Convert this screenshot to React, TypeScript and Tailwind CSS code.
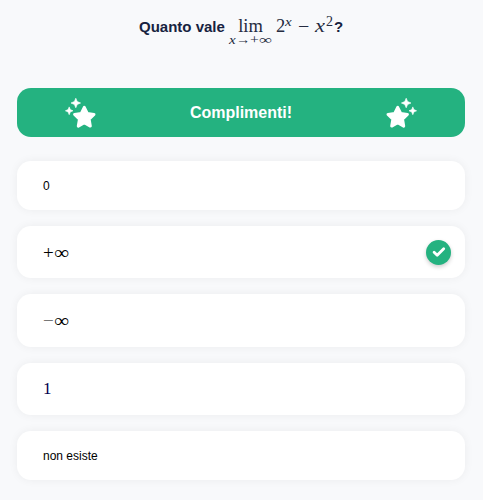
import type { ReactNode } from 'react';

function Stars({ flip = false }: { flip?: boolean }) {
  return (
    <svg viewBox="0 0 32 32" className={`mt-[3px] h-8 w-8 ${flip ? '-scale-x-100' : ''}`} fill="#fff" stroke="#fff" strokeLinejoin="round" aria-hidden="true">
      <path strokeWidth="3" d="M19.3 9.3l3 6.2 6.7.9-4.9 4.7 1.2 7-6-3.3-6 3.3 1.2-7-4.9-4.7 6.7-.9z" />
      <path strokeWidth=".6" d="M10.8.2l1.4 3.3 3.4 1.5-3.4 1.5-1.4 3.3-1.4-3.3L6 5l3.4-1.5zM4.2 8.9l1.1 2.7L8 12.8l-2.7 1.1-1.1 2.8-1.1-2.8-2.7-1.1 2.7-1.2z" />
    </svg>
  );
}

function Answer({ children, tall = false, correct = false }: { children: ReactNode; tall?: boolean; correct?: boolean }) {
  return (
    <div className={`flex w-full items-center justify-between rounded-[14px] bg-white pr-[14px] pl-[26px] text-[12px] text-black shadow-[0_0_10px_rgba(0,0,0,0.055)] ${tall ? 'h-[52.4px]' : 'h-[49px]'}`}>
      <div className="flex items-center">{children}</div>
      {correct && (
        <span className="flex h-[25px] w-[25px] items-center justify-center rounded-full bg-[#24b280] shadow-[0_2px_4px_rgba(0,0,0,0.2)]">
          <svg width="14" height="12" viewBox="0 0 14 12" fill="none" stroke="#fff" strokeWidth="2.8" strokeLinecap="round" strokeLinejoin="round" aria-hidden="true">
            <path d="M2.1 6.2l3.1 3L11.7 2.8" />
          </svg>
        </span>
      )}
    </div>
  );
}

const math = "font-['Liberation_Serif','DejaVu_Serif',serif] font-normal";

export default function App() {
  return (
    <main className="flex h-[500px] w-full flex-col bg-[#f8f9fb] pr-[18px] pl-[17px] font-['Liberation_Sans',Arial,sans-serif]">
      <h1 className="flex h-[88px] items-start pt-[15px] pl-[122px] text-[15px] leading-6 font-bold whitespace-nowrap text-[#172240]">
        <span className="w-[90px]">Quanto vale</span>
        <span className={`flex text-[#252b40] ${math}`}>
          <span className="flex w-[43px] flex-col items-center pt-[3px]">
            <span className="h-4 text-[18.5px] leading-4">lim</span>
            <span className="flex h-3 text-[12.5px] leading-3">
              <i className="w-[7px] origin-left scale-x-120">x</i>
              <span className="w-[14px] origin-left scale-x-115">→</span>
              <span className="w-[9px] origin-left scale-x-125">+</span>
              <span className="w-[13px] origin-left scale-x-[1.45]">∞</span>
            </span>
          </span>
          <span className="ml-[4px] w-[9px] text-[18.5px] leading-[22px]">2</span>
          <i className="w-[13px] origin-left scale-x-115 text-[13px] leading-[14px]">x</i>
          <span className="w-[17px] text-[20px] leading-[23px]">−</span>
          <i className="w-[11px] origin-left scale-x-125 text-[18px] leading-[22px]">x</i>
          <span className="w-[8px] text-[14px] leading-[13px]">2</span>
        </span>
        <span>?</span>
      </h1>
      <div className="mb-6 flex h-[49px] shrink-0 items-center justify-between rounded-[14px] bg-[#24b280] px-[48px] text-[16px] font-bold text-white">
        <Stars />
        <span>Complimenti!</span>
        <Stars flip />
      </div>
      <div className="flex flex-col gap-4">
        <Answer>0</Answer>
        <Answer tall correct>
          <span className={`flex pt-px text-[19px] leading-6 ${math}`}>
            <span className="w-[10.5px]">+</span>
            <span className="origin-left scale-x-110">∞</span>
          </span>
        </Answer>
        <Answer tall>
          <span className={`flex text-[19px] leading-6 ${math}`}>
            <span className="w-[10.5px] text-[#777]">−</span>
            <span className="origin-left scale-x-110">∞</span>
          </span>
        </Answer>
        <Answer tall>
          <span className={`text-[17px] leading-6 text-[#00004d] ${math}`}>1</span>
        </Answer>
        <Answer>non esiste</Answer>
      </div>
    </main>
  );
}
